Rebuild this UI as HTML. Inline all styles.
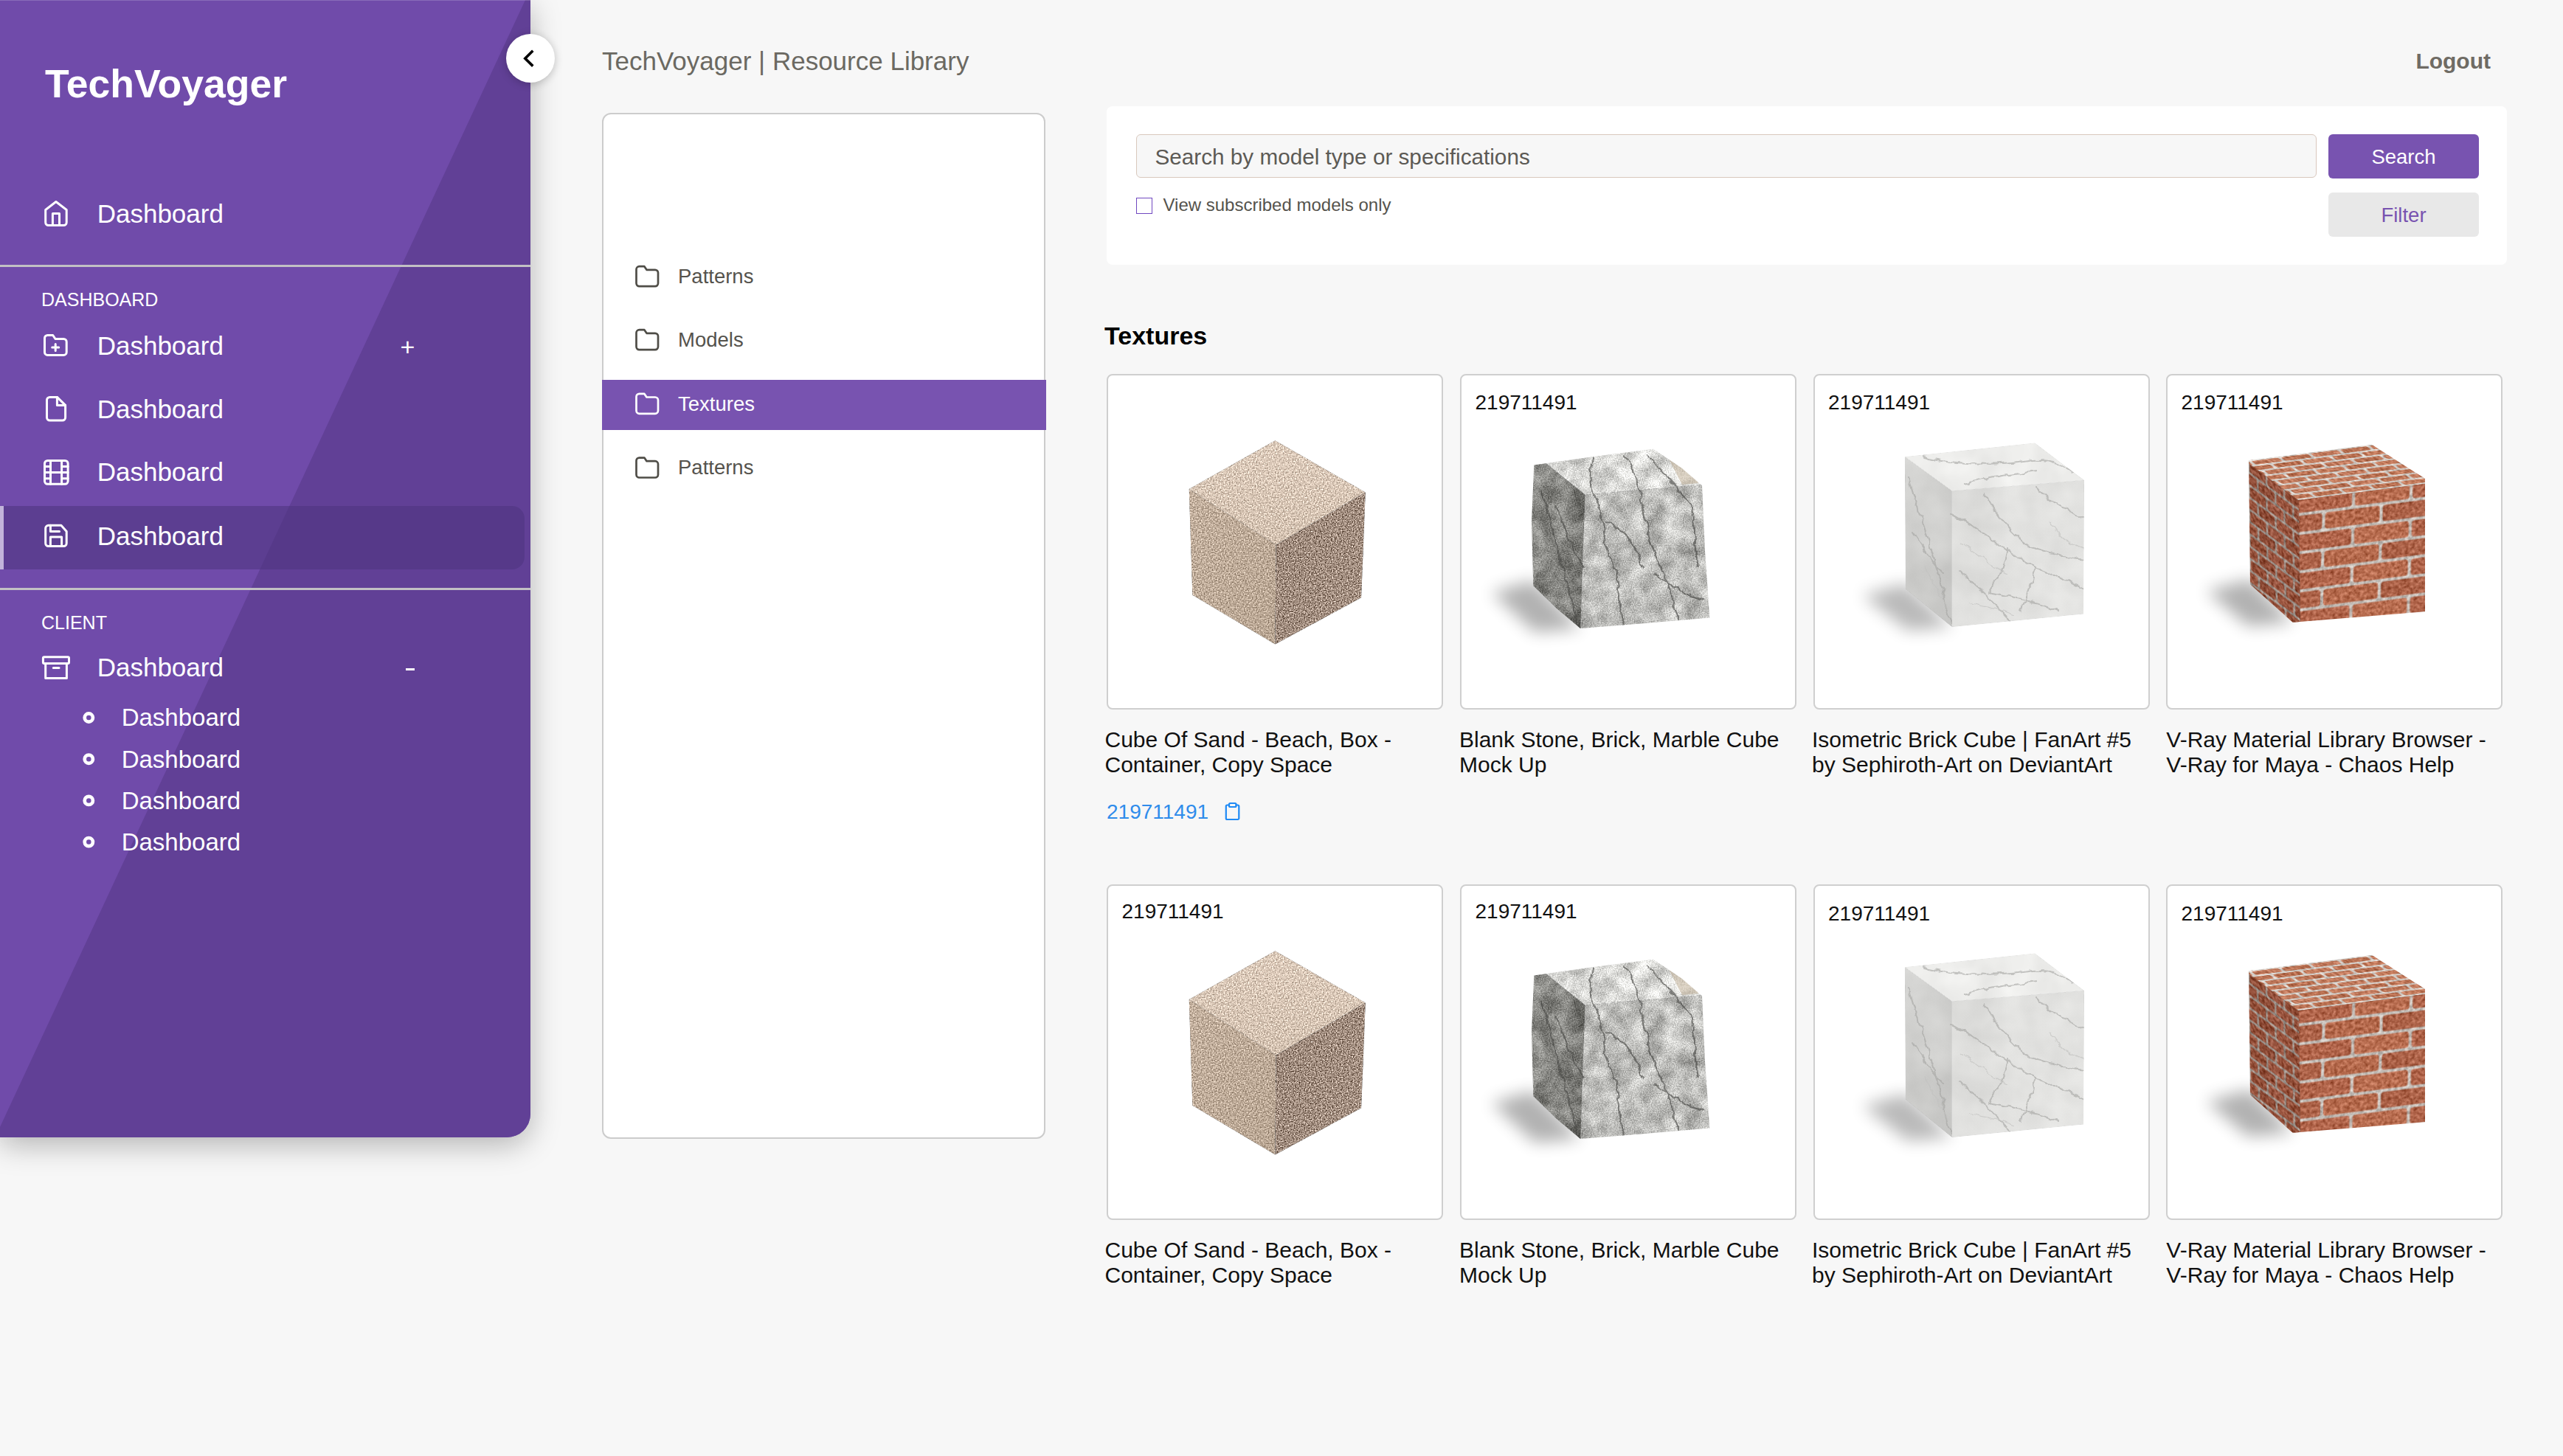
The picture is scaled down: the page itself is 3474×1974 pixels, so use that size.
<!DOCTYPE html>
<html><head><meta charset="utf-8">
<style>
html,body{margin:0;padding:0;}
body{width:3474px;height:1974px;background:#f7f7f7;position:relative;overflow:hidden;font-family:"Liberation Sans",sans-serif;}
.a{position:absolute;white-space:nowrap;line-height:1;}
#sb{position:absolute;left:0;top:0;width:719px;height:1542px;background:#704baa;border-bottom-right-radius:32px;overflow:hidden;box-shadow:0 10px 40px rgba(0,0,0,0.28);}
#sbdark{position:absolute;left:0;top:0;width:719px;height:1542px;background:#614096;clip-path:polygon(712px 0,719px 0,719px 1542px,0 1542px,0 1528px);}
.w{color:#fff;}
.div{position:absolute;left:0;width:719px;height:3px;background:#c2c0c4;}
svg.ic{position:absolute;left:0;top:0;overflow:visible;}
.card{position:absolute;width:452px;height:451px;background:#fff;border:2px solid #cfcfcf;border-radius:8px;}
svg.img{position:absolute;overflow:visible;}
.lbl{font-size:28px;color:#111;}
.ttl{font-size:30px;color:#111;}

</style></head>
<body>

<svg width="0" height="0" style="position:absolute;left:0;top:0">
<defs>
  <filter id="shblur" x="-60%" y="-60%" width="220%" height="220%"><feGaussianBlur stdDeviation="11"/></filter>
  <filter id="soft1" x="-10%" y="-10%" width="120%" height="120%"><feGaussianBlur stdDeviation="0.9"/></filter>
  <filter id="grain" x="0" y="0" width="100%" height="100%" color-interpolation-filters="sRGB">
    <feTurbulence type="fractalNoise" baseFrequency="0.6" numOctaves="2" seed="4" result="n"/>
    <feColorMatrix in="n" type="matrix" values="1 0 0 0 0  1 0 0 0 0  1 0 0 0 0  0 0 0 0 1" result="g"/>
    <feComposite in="SourceGraphic" in2="g" operator="arithmetic" k1="0" k2="1" k3="1.3" k4="-0.65" result="c"/>
    <feComposite in="c" in2="SourceAlpha" operator="in"/>
  </filter>
  <filter id="grainS" x="0" y="0" width="100%" height="100%" color-interpolation-filters="sRGB">
    <feTurbulence type="fractalNoise" baseFrequency="0.55" numOctaves="2" seed="12" result="n"/>
    <feColorMatrix in="n" type="matrix" values="1 0 0 0 0  1 0 0 0 0  1 0 0 0 0  0 0 0 0 1" result="g"/>
    <feComposite in="SourceGraphic" in2="g" operator="arithmetic" k1="0" k2="1" k3="0.8" k4="-0.4" result="c"/>
    <feComposite in="c" in2="SourceAlpha" operator="in"/>
  </filter>
  <filter id="stoneTex" x="0" y="0" width="100%" height="100%" color-interpolation-filters="sRGB">
    <feTurbulence type="fractalNoise" baseFrequency="0.04" numOctaves="4" seed="7" result="n1"/>
    <feColorMatrix in="n1" type="matrix" values="1 0 0 0 0  1 0 0 0 0  1 0 0 0 0  0 0 0 0 1" result="g1"/>
    <feTurbulence type="fractalNoise" baseFrequency="0.65" numOctaves="1" seed="3" result="n2"/>
    <feColorMatrix in="n2" type="matrix" values="1 0 0 0 0  1 0 0 0 0  1 0 0 0 0  0 0 0 0 1" result="g2"/>
    <feComposite in="SourceGraphic" in2="g1" operator="arithmetic" k1="0" k2="1" k3="0.5" k4="-0.25" result="c1"/>
    <feComposite in="c1" in2="g2" operator="arithmetic" k1="0" k2="1" k3="0.55" k4="-0.275" result="c2"/>
    <feComposite in="c2" in2="SourceAlpha" operator="in"/>
  </filter>
  <filter id="marbleTex" x="0" y="0" width="100%" height="100%" color-interpolation-filters="sRGB">
    <feTurbulence type="fractalNoise" baseFrequency="0.02" numOctaves="3" seed="17" result="n1"/>
    <feColorMatrix in="n1" type="matrix" values="1 0 0 0 0  1 0 0 0 0  1 0 0 0 0  0 0 0 0 1" result="g1"/>
    <feComposite in="SourceGraphic" in2="g1" operator="arithmetic" k1="0" k2="1" k3="0.1" k4="-0.05" result="c1"/>
    <feComposite in="c1" in2="SourceAlpha" operator="in"/>
  </filter>
  <filter id="brickTex" x="0" y="0" width="100%" height="100%" color-interpolation-filters="sRGB">
    <feTurbulence type="fractalNoise" baseFrequency="0.22" numOctaves="3" seed="5" result="n1"/>
    <feColorMatrix in="n1" type="matrix" values="1 0 0 0 0  1 0 0 0 0  1 0 0 0 0  0 0 0 0 1" result="g1"/>
    <feComposite in="SourceGraphic" in2="g1" operator="arithmetic" k1="0" k2="1" k3="0.45" k4="-0.225" result="c1"/>
    <feComposite in="c1" in2="SourceAlpha" operator="in"/>
  </filter>
  <filter id="sandDark" x="0" y="0" width="100%" height="100%">
    <feTurbulence type="turbulence" baseFrequency="0.6" numOctaves="1" seed="4"/>
    <feColorMatrix type="matrix" values="0 0 0 0 0.32  0 0 0 0 0.26  0 0 0 0 0.22  5 0 0 0 -1.6"/>
  </filter>
  <filter id="sandLight" x="0" y="0" width="100%" height="100%">
    <feTurbulence type="turbulence" baseFrequency="0.65" numOctaves="1" seed="11"/>
    <feColorMatrix type="matrix" values="0 0 0 0 1  0 0 0 0 0.97  0 0 0 0 0.92  0 5 0 0 -1.7"/>
  </filter>
  <filter id="sandRed" x="0" y="0" width="100%" height="100%">
    <feTurbulence type="turbulence" baseFrequency="0.5" numOctaves="1" seed="21"/>
    <feColorMatrix type="matrix" values="0 0 0 0 0.55  0 0 0 0 0.3  0 0 0 0 0.25  0 0 6 0 -2.3"/>
  </filter>
  <filter id="stoneBlot" x="0" y="0" width="100%" height="100%">
    <feTurbulence type="fractalNoise" baseFrequency="0.06" numOctaves="4" seed="7"/>
    <feColorMatrix type="matrix" values="0 0 0 0 0.25  0 0 0 0 0.25  0 0 0 0 0.24  -4 0 0 0 2.2"/>
  </filter>
  <filter id="stoneLight" x="0" y="0" width="100%" height="100%">
    <feTurbulence type="fractalNoise" baseFrequency="0.05" numOctaves="4" seed="3"/>
    <feColorMatrix type="matrix" values="0 0 0 0 0.96  0 0 0 0 0.96  0 0 0 0 0.95  4 0 0 0 -2.0"/>
  </filter>
  <filter id="stoneGrain" x="0" y="0" width="100%" height="100%">
    <feTurbulence type="turbulence" baseFrequency="0.7" numOctaves="1" seed="2"/>
    <feColorMatrix type="matrix" values="0 0 0 0 0.3  0 0 0 0 0.3  0 0 0 0 0.3  4 0 0 0 -1.2"/>
  </filter>
  <filter id="brickn" x="0" y="0" width="100%" height="100%">
    <feTurbulence type="turbulence" baseFrequency="0.3" numOctaves="2" seed="5"/>
    <feColorMatrix type="matrix" values="0 0 0 0 0.3  0 0 0 0 0.13  0 0 0 0 0.08  4 0 0 0 -1.3"/>
  </filter>
  <filter id="crack" x="-5%" y="-5%" width="110%" height="110%">
    <feTurbulence type="fractalNoise" baseFrequency="0.08" numOctaves="2" seed="8" result="t"/>
    <feDisplacementMap in="SourceGraphic" in2="t" scale="9" xChannelSelector="R" yChannelSelector="G"/>
  </filter>
  <pattern id="bricks" patternUnits="userSpaceOnUse" width="156" height="52">
    <rect width="156" height="52" fill="#c4beb8"/>
    <rect x="2.5" y="2.5" width="74" height="22" rx="4" fill="#b0644a"/>
    <rect x="80.5" y="2.5" width="74" height="22" rx="4" fill="#b86d50"/>
    <rect x="-37.5" y="28.5" width="74" height="22" rx="4" fill="#ad6349"/>
    <rect x="40.5" y="28.5" width="74" height="22" rx="4" fill="#b4694c"/>
    <rect x="118.5" y="28.5" width="74" height="22" rx="4" fill="#aa6046"/>
  </pattern>
  <pattern id="bricksL" patternUnits="userSpaceOnUse" width="60" height="34">
    <rect width="60" height="34" fill="#9c938c"/>
    <rect x="1.5" y="1.5" width="27" height="14" rx="2" fill="#8f4c36"/>
    <rect x="31.5" y="1.5" width="27" height="14" rx="2" fill="#995540"/>
    <rect x="-13.5" y="18.5" width="27" height="14" rx="2" fill="#94503a"/>
    <rect x="16.5" y="18.5" width="27" height="14" rx="2" fill="#8c4a35"/>
    <rect x="46.5" y="18.5" width="27" height="14" rx="2" fill="#97523c"/>
  </pattern>
  <pattern id="bricksT" patternUnits="userSpaceOnUse" width="84" height="22">
    <rect width="84" height="22" fill="#d4cec8"/>
    <rect x="2" y="2" width="38" height="8" rx="2" fill="#c17a5d"/>
    <rect x="44" y="2" width="38" height="8" rx="2" fill="#b97254"/>
    <rect x="-19" y="13" width="38" height="8" rx="2" fill="#bf7759"/>
    <rect x="23" y="13" width="38" height="8" rx="2" fill="#b86f50"/>
    <rect x="65" y="13" width="38" height="8" rx="2" fill="#c47c5d"/>
  </pattern>
  <clipPath id="sandclip"><polygon points="227.4,90.2 349.8,160.4 344.1,303.2 227.4,366.6 115.3,299.8 110.7,155.9"/></clipPath>
  <clipPath id="sandR"><polygon points="228.6,231.8 349.8,160.4 344.1,303.2 227.4,366.6"/></clipPath>
  <clipPath id="stoneF"><polygon points="168.4,163.7 327,151.3 337.3,330.6 162.2,345"/></clipPath>
  <clipPath id="stoneclip"><path d="M99.3,123.5 L180,112 L261,101.8 L300,128 L327,151.3 L331,240 L337.3,330.6 L250,338 L162.2,345 L130,318 L98.3,287.3 L96,200 Z"/></clipPath>
  <clipPath id="marbleclip"><polygon points="122.9,112.2 299.1,93.6 366,144.1 365,325.4 186.8,343 123.9,291.4"/></clipPath>
  <clipPath id="brickclip"><polygon points="111,117.3 277.9,95.7 350,142 350,322.3 170.8,336.8 113,285.2"/></clipPath>
  <linearGradient id="sandTop" x1="0" y1="0" x2="0" y2="1"><stop offset="0" stop-color="#ddcbbb"/><stop offset="1" stop-color="#d4c2b1"/></linearGradient>
  <linearGradient id="sandLeft" x1="0" y1="0" x2="1" y2="1"><stop offset="0" stop-color="#c3b09e"/><stop offset="1" stop-color="#b9a693"/></linearGradient>
  <linearGradient id="sandRight" x1="0" y1="0" x2="1" y2="1"><stop offset="0" stop-color="#9c887a"/><stop offset="1" stop-color="#a59183"/></linearGradient>
  <linearGradient id="marLeft" x1="0" y1="0" x2="1" y2="1"><stop offset="0" stop-color="#d8d8d6"/><stop offset="1" stop-color="#c6c6c4"/></linearGradient>
  <linearGradient id="marFront" x1="0" y1="0" x2="1" y2="1"><stop offset="0" stop-color="#dcdcda"/><stop offset="1" stop-color="#e6e6e4"/></linearGradient>
  <linearGradient id="stoneL" x1="0" y1="0" x2="1" y2="0"><stop offset="0" stop-color="#92928e"/><stop offset="1" stop-color="#777773"/></linearGradient>

  <g id="cube0">
    <g filter="url(#grainS)">
      <polygon points="227.4,90.2 349.8,160.4 228.6,231.8 110.7,155.9" fill="url(#sandTop)"/>
      <polygon points="110.7,155.9 228.6,231.8 227.4,366.6 115.3,299.8" fill="url(#sandLeft)"/>
    </g>
    <polygon points="228.6,231.8 349.8,160.4 344.1,303.2 227.4,366.6" fill="url(#sandRight)" filter="url(#grain)"/>
  </g>

  <g id="cube1">
    <polygon points="98.3,280 162.2,345 100,350 42,296" fill="#000" opacity="0.3" filter="url(#shblur)"/>
    <g clip-path="url(#stoneclip)">
      <g filter="url(#stoneTex)">
        <polygon points="90,100 265,95 330,150 168.4,163.7" fill="#d9d9d6"/>
        <polygon points="88,99 168.4,163.7 162.2,350 88,300" fill="url(#stoneL)"/>
        <polygon points="168.4,163.7 330,150 340,335 162.2,350" fill="#bdbdba"/>
      </g>
      <g fill="none" stroke="#4a4a46" stroke-width="2" opacity="0.65" stroke-linecap="round" filter="url(#crack)">
        <path d="M180 106 C178 125 170 140 182 165 C196 195 190 225 206 255 C218 285 212 315 222 345"/>
        <path d="M222 112 C235 132 242 150 246 180 C252 205 258 235 270 258 C280 280 288 310 296 338"/>
        <path d="M110 160 C122 200 132 235 140 270 C146 300 155 322 160 345"/>
        <path d="M255 110 C270 130 290 150 312 178 C318 200 314 230 322 260"/>
        <path d="M196 200 C222 212 236 230 248 262"/>
        <path d="M262 270 C282 285 300 300 330 305"/>
        <path d="M128 180 C142 210 150 240 168 262"/>
      </g>
      <path d="M285 108 C300 116 318 130 322 148 L300 150 C292 135 285 120 280 112 Z" fill="#b8a488" opacity="0.45"/>
    </g>
  </g>

  <g id="cube2">
    <polygon points="123.9,284 186.8,343 126.8,348 66,300" fill="#000" opacity="0.27" filter="url(#shblur)"/>
    <g filter="url(#marbleTex)">
    <polygon points="122.9,112.2 299.1,93.6 366,144.1 186.8,158.5" fill="#ededeb"/>
    <polygon points="122.9,112.2 186.8,158.5 186.8,343 123.9,291.4" fill="url(#marLeft)"/>
    <polygon points="186.8,158.5 366,144.1 365,325.4 186.8,343" fill="url(#marFront)"/>
    </g>
    <g clip-path="url(#marbleclip)">
    <g fill="none" stroke="#a3a3a1" stroke-width="2" opacity="0.6" stroke-linecap="round" filter="url(#crack)">
      <path d="M186 190 C205 200 225 214 245 226 C262 238 282 256 300 262 C322 270 345 282 366 292"/>
      <path d="M232 162 C244 185 258 205 276 222 C296 240 325 246 366 252"/>
      <path d="M300 152 C315 168 338 184 366 196"/>
      <path d="M196 268 C214 282 232 298 246 314 C256 326 266 336 276 342"/>
      <path d="M128 140 C138 178 152 214 162 248 C170 280 178 310 186 338"/>
      <path d="M148 112 C188 122 238 126 296 116 C318 114 334 122 350 134"/>
      <path d="M236 296 C262 300 292 306 330 322"/>
      <path d="M262 236 C258 258 250 278 236 298"/>
      <path d="M300 262 C296 280 290 300 280 322"/>
      <path d="M134 214 C148 236 160 256 176 272"/>
      <path d="M205 150 C230 140 262 138 300 132"/>
    </g>
    <g fill="none" stroke="#c2c2c0" stroke-width="1.3" opacity="0.7" filter="url(#crack)">
      <path d="M200 230 C220 240 240 262 262 270"/>
      <path d="M320 200 C330 220 345 232 366 236"/>
      <path d="M210 310 C230 316 250 318 270 326"/>
      <path d="M150 260 C160 280 170 300 182 318"/>
    </g>
    </g>
  </g>

  <g id="cube3">
    <polygon points="113,278 170.8,336.8 110,342 54,294" fill="#000" opacity="0.3" filter="url(#shblur)"/>
    <g clip-path="url(#brickclip)">
      <g transform="matrix(1.0006,-0.1297,-0.0238,1.0006,174.9,164.7)">
        <rect x="-10" y="-10" width="200" height="200" fill="url(#bricks)" filter="url(#brickTex)"/>
      </g>
      <g transform="matrix(0.799,0.5925,0.0116,0.976,111,117.3)">
        <rect x="-5" y="-5" width="90" height="190" fill="url(#bricksL)" filter="url(#brickTex)"/>
      </g>
      <g transform="matrix(0.9537,-0.1234,0.799,0.5925,111,117.3)">
        <rect x="-5" y="-5" width="190" height="95" fill="url(#bricksT)" filter="url(#brickTex)"/>
      </g>
    </g>
  </g>
</defs>
</svg>
<div id="sb">
  <div id="sbdark"></div>
  <div style="position:absolute;left:0;top:0;width:719px;height:1px;background:rgba(255,255,255,0.18);"></div>
  <div class="a w" style="left:61px;top:87.3px;font-size:53.5px;font-weight:700;">TechVoyager</div>
  <div class="a w" style="left:131.7px;top:272.17px;font-size:35px;">Dashboard</div>
  <div class="div" style="top:359px;"></div>
  <div class="a w" style="left:56px;top:394.34px;font-size:25px;">DASHBOARD</div>
  <div class="a w" style="left:131.7px;top:450.87px;font-size:35px;">Dashboard</div>
  <div class="a w" style="left:542.5px;top:452.8px;font-size:34px;">+</div>
  <div class="a w" style="left:131.7px;top:536.67px;font-size:35px;">Dashboard</div>
  <div class="a w" style="left:131.7px;top:622.37px;font-size:35px;">Dashboard</div>
  <div style="position:absolute;left:0;top:686px;width:710.5px;height:86px;background:rgba(79,53,128,0.6);border-radius:0 17px 17px 0;"></div>
  <div style="position:absolute;left:0;top:686px;width:5px;height:86px;background:#c2b4da;"></div>
  <div class="a w" style="left:131.7px;top:708.97px;font-size:35px;">Dashboard</div>
  <div class="div" style="top:796.5px;"></div>
  <div class="a w" style="left:56px;top:831.84px;font-size:25px;">CLIENT</div>
  <div class="a w" style="left:131.7px;top:887.37px;font-size:35px;">Dashboard</div>
  <div style="position:absolute;left:550px;top:905.5px;width:12px;height:3.5px;background:#fff;"></div>
  <div class="a w" style="left:164.7px;top:956.47px;font-size:33px;">Dashboard</div>
  <div class="a w" style="left:164.7px;top:1012.67px;font-size:33px;">Dashboard</div>
  <div class="a w" style="left:164.7px;top:1068.87px;font-size:33px;">Dashboard</div>
  <div class="a w" style="left:164.7px;top:1125.07px;font-size:33px;">Dashboard</div>
  <svg class="ic" width="719" height="1542" fill="none" stroke="#fff" stroke-width="3" stroke-linecap="round" stroke-linejoin="round">
    <!-- home -->
    <path d="M61.7 284.5 L75.9 273.5 L90.2 284.5 V301.5 a4 4 0 0 1 -4 4 H65.7 a4 4 0 0 1 -4 -4 Z"/>
    <path d="M71.4 305.5 V289.5 H80.5 V305.5" stroke-linecap="butt"/>
    <!-- folder plus -->
    <path d="M64.5 454.5 H71.7 L75 459.5 H86.2 a4 4 0 0 1 4 4 V477.4 a4 4 0 0 1 -4 4 H64.5 a4 4 0 0 1 -4 -4 V458.5 a4 4 0 0 1 4 -4 Z"/>
    <path d="M75.2 466.5 V475.5 M70.7 471 H79.7"/>
    <!-- file -->
    <path d="M77.4 538.4 H67.5 a4 4 0 0 0 -4 4 V566.1 a4 4 0 0 0 4 4 H84.6 a4 4 0 0 0 4 -4 V549.4 Z"/>
    <path d="M77.4 538.4 V549.4 H88.6"/>
    <!-- film -->
    <rect x="60.5" y="624.5" width="31.6" height="31.8" rx="4"/>
    <path d="M68.5 624.5 V656.3 M83.6 624.5 V656.3 M60.5 640.5 H92.1 M60.5 632.6 H68.5 M60.5 648.7 H68.5 M83.6 632.6 H92.1 M83.6 648.7 H92.1"/>
    <!-- save -->
    <path d="M65.7 712.3 H82.9 L90.2 720.5 V736.6 a4 4 0 0 1 -4 4 H65.7 a4 4 0 0 1 -4 -4 V716.3 a4 4 0 0 1 4 -4 Z"/>
    <path d="M68.4 712.3 V720.4 H80.5"/>
    <path d="M68.4 740.6 V728 H83.6 V740.6"/>
    <!-- archive -->
    <rect x="58.4" y="890.7" width="35.1" height="8.8" rx="1.5"/>
    <path d="M61.7 899.5 V919.5 H90.4 V899.5"/>
    <path d="M72.3 905.5 H80"/>
    <!-- bullets -->
    <circle cx="120.3" cy="973" r="5.6" stroke-width="4.7"/>
    <circle cx="120.3" cy="1029.2" r="5.6" stroke-width="4.7"/>
    <circle cx="120.3" cy="1085.4" r="5.6" stroke-width="4.7"/>
    <circle cx="120.3" cy="1141.6" r="5.6" stroke-width="4.7"/>
  </svg>
</div>
<!-- collapse btn -->
<div style="position:absolute;left:685.5px;top:45.8px;width:66.5px;height:66.5px;border-radius:50%;background:#fff;box-shadow:0 2px 12px rgba(0,0,0,0.22);"></div>
<svg class="ic" width="3474" height="200" fill="none" stroke="#000" stroke-width="3.6" stroke-linecap="butt" stroke-linejoin="miter">
  <path d="M722.3 68.8 L711.8 79.2 L722.3 89.6"/>
</svg>

<!-- header -->
<div class="a" style="left:816px;top:65.15px;font-size:35px;color:#6b6962;">TechVoyager | Resource Library</div>
<div class="a" style="right:98px;top:68.2px;font-size:30px;font-weight:700;color:#6f6b64;">Logout</div>

<!-- folder panel -->
<div style="position:absolute;left:816.3px;top:153px;width:597px;height:1387px;background:#fff;border:2px solid #cccccc;border-radius:12px;"></div>
<div style="position:absolute;left:816px;top:515px;width:602px;height:68px;background:#7853b0;"></div>
<div class="a" style="left:919px;top:360.72px;font-size:27.5px;color:#55534d;">Patterns</div>
<div class="a" style="left:919px;top:446.72px;font-size:27.5px;color:#55534d;">Models</div>
<div class="a" style="left:919px;top:533.72px;font-size:27.5px;color:#fff;">Textures</div>
<div class="a" style="left:919px;top:620.12px;font-size:27.5px;color:#55534d;">Patterns</div>
<svg class="ic" width="3474" height="800" fill="none" stroke-width="2.7" stroke-linecap="round" stroke-linejoin="round">
  <g stroke="#4f4d47">
    <path id="fold" d="M866.5 361.2 H873.4 L876.5 365.8 H888 a4 4 0 0 1 4 4 V384.1 a4 4 0 0 1 -4 4 H866.5 a4 4 0 0 1 -4 -4 V365.2 a4 4 0 0 1 4 -4 Z"/>
    <use href="#fold" y="86"/>
    <use href="#fold" y="259.4"/>
  </g>
  <use href="#fold" y="172.7" stroke="#fff"/>
</svg>

<!-- search card -->
<div style="position:absolute;left:1500px;top:144px;width:1898px;height:214.6px;background:#fff;border-radius:8px;"></div>
<div style="position:absolute;left:1540px;top:182px;width:1598px;height:57px;background:#f7f7f7;border:1.5px solid #d9c8bd;border-radius:6px;"></div>
<div class="a" style="left:1565.5px;top:198.20px;font-size:29.7px;color:#5c5a55;">Search by model type or specifications</div>
<div style="position:absolute;left:1540px;top:268px;width:20px;height:20px;border:1.5px solid #7048c0;"></div>
<div class="a" style="left:1576.5px;top:266.26px;font-size:24px;color:#55534d;">View subscribed models only</div>
<div style="position:absolute;left:3156px;top:182px;width:204px;height:60px;background:#7853b0;border-radius:6px;"></div>
<div class="a" style="left:3156px;top:199.32px;width:204px;text-align:center;font-size:27.5px;color:#fff;">Search</div>
<div style="position:absolute;left:3156px;top:261px;width:204px;height:60px;background:#e8e8e8;border-radius:6px;"></div>
<div class="a" style="left:3156px;top:278.22px;width:204px;text-align:center;font-size:27.5px;color:#7853b0;">Filter</div>

<!-- heading -->
<div class="a" style="left:1497px;top:438.2px;font-size:34px;font-weight:700;color:#000;">Textures</div>

<!--CARDS-->
<div class="card" style="left:1500px;top:506.5px;"></div>
<svg class="img" style="left:1501px;top:507px;" width="456" height="456" viewBox="0 0 456 456"><use href="#cube0"/></svg>
<div class="a ttl" style="left:1497.5px;top:987.6px;">Cube Of Sand - Beach, Box -</div>
<div class="a ttl" style="left:1497.5px;top:1021.6px;">Container, Copy Space</div>
<div class="card" style="left:1979px;top:506.5px;"></div>
<svg class="img" style="left:1980px;top:507px;" width="456" height="456" viewBox="0 0 456 456"><use href="#cube1"/></svg>
<div class="a lbl" style="left:1999.5px;top:531.7px;">219711491</div>
<div class="a ttl" style="left:1978px;top:987.6px;">Blank Stone, Brick, Marble Cube</div>
<div class="a ttl" style="left:1978px;top:1021.6px;">Mock Up</div>
<div class="card" style="left:2457.5px;top:506.5px;"></div>
<svg class="img" style="left:2458.5px;top:507px;" width="456" height="456" viewBox="0 0 456 456"><use href="#cube2"/></svg>
<div class="a lbl" style="left:2478.0px;top:531.7px;">219711491</div>
<div class="a ttl" style="left:2456.0px;top:987.6px;">Isometric Brick Cube | FanArt #5</div>
<div class="a ttl" style="left:2456.0px;top:1021.6px;">by Sephiroth-Art on DeviantArt</div>
<div class="card" style="left:2936px;top:506.5px;"></div>
<svg class="img" style="left:2937px;top:507px;" width="456" height="456" viewBox="0 0 456 456"><use href="#cube3"/></svg>
<div class="a lbl" style="left:2956.5px;top:531.7px;">219711491</div>
<div class="a ttl" style="left:2936.3px;top:987.6px;">V-Ray Material Library Browser -</div>
<div class="a ttl" style="left:2936.3px;top:1021.6px;">V-Ray for Maya - Chaos Help</div>
<div class="card" style="left:1500px;top:1198.5px;"></div>
<svg class="img" style="left:1501px;top:1199px;" width="456" height="456" viewBox="0 0 456 456"><use href="#cube0"/></svg>
<div class="a lbl" style="left:1520.5px;top:1222.4px;">219711491</div>
<div class="a ttl" style="left:1497.5px;top:1679.6px;">Cube Of Sand - Beach, Box -</div>
<div class="a ttl" style="left:1497.5px;top:1713.6px;">Container, Copy Space</div>
<div class="card" style="left:1979px;top:1198.5px;"></div>
<svg class="img" style="left:1980px;top:1199px;" width="456" height="456" viewBox="0 0 456 456"><use href="#cube1"/></svg>
<div class="a lbl" style="left:1999.5px;top:1222.4px;">219711491</div>
<div class="a ttl" style="left:1978px;top:1679.6px;">Blank Stone, Brick, Marble Cube</div>
<div class="a ttl" style="left:1978px;top:1713.6px;">Mock Up</div>
<div class="card" style="left:2457.5px;top:1198.5px;"></div>
<svg class="img" style="left:2458.5px;top:1199px;" width="456" height="456" viewBox="0 0 456 456"><use href="#cube2"/></svg>
<div class="a lbl" style="left:2478.0px;top:1224.5px;">219711491</div>
<div class="a ttl" style="left:2456.0px;top:1679.6px;">Isometric Brick Cube | FanArt #5</div>
<div class="a ttl" style="left:2456.0px;top:1713.6px;">by Sephiroth-Art on DeviantArt</div>
<div class="card" style="left:2936px;top:1198.5px;"></div>
<svg class="img" style="left:2937px;top:1199px;" width="456" height="456" viewBox="0 0 456 456"><use href="#cube3"/></svg>
<div class="a lbl" style="left:2956.5px;top:1224.5px;">219711491</div>
<div class="a ttl" style="left:2936.3px;top:1679.6px;">V-Ray Material Library Browser -</div>
<div class="a ttl" style="left:2936.3px;top:1713.6px;">V-Ray for Maya - Chaos Help</div>
<div class="a" style="left:1500px;top:1087.1px;font-size:28px;color:#2f8ceb;">219711491</div>
<svg class="ic" width="3474" height="1974" fill="none" stroke="#1f8af5" stroke-width="2.2" stroke-linejoin="round" stroke-linecap="round"><path d="M1665.5 1091.5 H1663.3 a1.5 1.5 0 0 0 -1.5 1.5 V1109.5 a1.5 1.5 0 0 0 1.5 1.5 H1677.8 a1.5 1.5 0 0 0 1.5 -1.5 V1093 a1.5 1.5 0 0 0 -1.5 -1.5 H1675.5"/><rect x="1666" y="1089" width="9.5" height="5" rx="1.5"/></svg>
<!--/CARDS-->
</body></html>
